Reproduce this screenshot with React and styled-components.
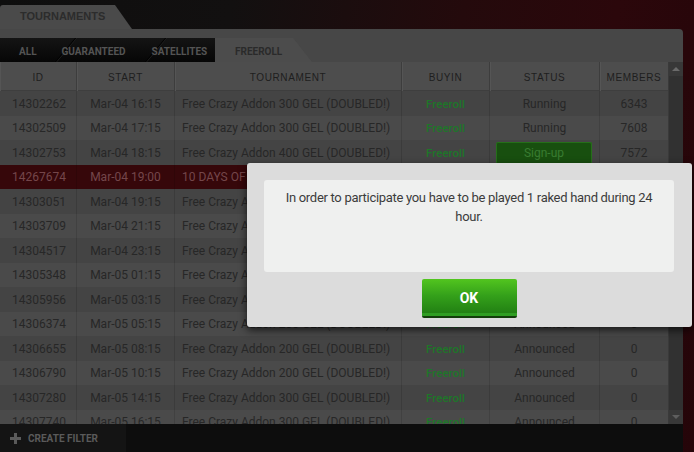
import React from 'react';
import styled, { createGlobalStyle } from 'styled-components';

const rows = [
    { id: '14302262', start: 'Mar-04 16:15', name: 'Free Crazy Addon 300 GEL (DOUBLED!)', status: 'Running', members: '6343' },
    { id: '14302509', start: 'Mar-04 17:15', name: 'Free Crazy Addon 300 GEL (DOUBLED!)', status: 'Running', members: '7608' },
    { id: '14302753', start: 'Mar-04 18:15', name: 'Free Crazy Addon 400 GEL (DOUBLED!)', status: 'Sign-up', members: '7572' },
    { id: '14267674', start: 'Mar-04 19:00', name: '10 DAYS OF FREEROLLS 1000 GEL', status: 'Running', members: '2114', active: true },
    { id: '14303051', start: 'Mar-04 19:15', name: 'Free Crazy Addon 300 GEL (DOUBLED!)', status: 'Registering', members: '312' },
    { id: '14303709', start: 'Mar-04 21:15', name: 'Free Crazy Addon 300 GEL (DOUBLED!)', status: 'Registering', members: '148' },
    { id: '14304517', start: 'Mar-04 23:15', name: 'Free Crazy Addon 300 GEL (DOUBLED!)', status: 'Registering', members: '56' },
    { id: '14305348', start: 'Mar-05 01:15', name: 'Free Crazy Addon 200 GEL (DOUBLED!)', status: 'Announced', members: '0' },
    { id: '14305956', start: 'Mar-05 03:15', name: 'Free Crazy Addon 200 GEL (DOUBLED!)', status: 'Announced', members: '0' },
    { id: '14306374', start: 'Mar-05 05:15', name: 'Free Crazy Addon 200 GEL (DOUBLED!)', status: 'Announced', members: '0' },
    { id: '14306655', start: 'Mar-05 08:15', name: 'Free Crazy Addon 200 GEL (DOUBLED!)', status: 'Announced', members: '0' },
    { id: '14306790', start: 'Mar-05 10:15', name: 'Free Crazy Addon 200 GEL (DOUBLED!)', status: 'Announced', members: '0' },
    { id: '14307280', start: 'Mar-05 14:15', name: 'Free Crazy Addon 300 GEL (DOUBLED!)', status: 'Announced', members: '0' },
    { id: '14307740', start: 'Mar-05 16:15', name: 'Free Crazy Addon 300 GEL (DOUBLED!)', status: 'Announced', members: '0' },
];

const columns = ['ID', 'START', 'TOURNAMENT', 'BUYIN', 'STATUS', 'MEMBERS'];
const tabs = ['ALL', 'GUARANTEED', 'SATELLITES'];

function App() {
    return (
        <>
            <GlobalStyle />
            <Page>
                <Window>
                    <TitleTab>TOURNAMENTS</TitleTab>
                    <Panel>
                        <TabBar>
                            <DarkTabs>
                                {tabs.map((t) => (
                                    <DarkTab key={t}>{t}</DarkTab>
                                ))}
                            </DarkTabs>
                            <ActiveTab>FREEROLL</ActiveTab>
                        </TabBar>
                        <TableArea>
                            <Table>
                                <HeaderRow>
                                    {columns.map((c) => (
                                        <HeaderCell key={c}>{c}</HeaderCell>
                                    ))}
                                </HeaderRow>
                                <Body>
                                    {rows.map((r, i) => (
                                        <Row key={r.id} $odd={i % 2 === 1} $active={r.active}>
                                            <Cell $align="left">{r.id}</Cell>
                                            <Cell>{r.start}</Cell>
                                            <Cell $align="left" $pad="7px">{r.name}</Cell>
                                            <Cell><BuyIn>Freeroll</BuyIn></Cell>
                                            <Cell>
                                                {r.status === 'Sign-up' ? <SignUp>Sign-up</SignUp> : r.status}
                                            </Cell>
                                            <Cell>{r.members}</Cell>
                                        </Row>
                                    ))}
                                </Body>
                            </Table>
                            <ScrollTrack>
                                <ScrollButton>
                                    <Arrow />
                                </ScrollButton>
                                <ScrollButton>
                                    <Arrow $down />
                                </ScrollButton>
                            </ScrollTrack>
                        </TableArea>
                        <BottomBar>
                            <FilterButton>
                                <svg width="11" height="11" viewBox="0 0 11 11">
                                    <rect x="4" y="0" width="3" height="11" fill="#5a5a5a" />
                                    <rect x="0" y="4" width="11" height="3" fill="#5a5a5a" />
                                </svg>
                                CREATE FILTER
                            </FilterButton>
                        </BottomBar>
                    </Panel>
                </Window>

                <Modal>
                    <MessageBox>
                        In order to participate you have to be played 1 raked hand during 24 hour.
                    </MessageBox>
                    <OkButton>OK</OkButton>
                </Modal>
            </Page>
        </>
    );
}

const GlobalStyle = createGlobalStyle`
    html, body {
        margin: 0;
        padding: 0;
        width: 694px;
        height: 452px;
        overflow: hidden;
    }
    body {
        font-family: 'Roboto', 'Liberation Sans', sans-serif;
    }
`;

const Page = styled.div`
    position: relative;
    width: 694px;
    height: 452px;
    overflow: hidden;
    background: linear-gradient(100deg, #0e0e0e 0%, #121010 30%, #240a0c 60%, #2b070b 80%, #250509 100%);
`;

const Window = styled.div`
    display: flex;
    flex-direction: column;
    width: 683px;
    height: 452px;
    padding-top: 5px;
    box-sizing: border-box;
`;

const TitleTab = styled.div`
    width: 132px;
    height: 24px;
    background: #4a4a4a;
    border-top-left-radius: 3px;
    clip-path: polygon(0 0, 115px 0, 100% 100%, 0 100%);
    font-family: 'Liberation Sans', sans-serif;
    font-size: 11px;
    font-weight: bold;
    color: #2c2c2c;
    padding-left: 20px;
    box-sizing: border-box;
    line-height: 23px;
`;

const Panel = styled.div`
    flex: 1;
    display: flex;
    flex-direction: column;
    background: #474747;
    border-top-right-radius: 4px;
    padding-top: 9px;
    min-height: 0;
`;

const TabBar = styled.div`
    display: flex;
    height: 24px;
`;

const DarkTabs = styled.div`
    display: flex;
    background: linear-gradient(#141414, #060606);
    width: 215px;
`;

const DarkTab = styled.div`
    position: relative;
    font-family: 'Roboto', sans-serif;
    font-size: 10px;
    font-weight: bold;
    color: #545454;
    line-height: 24px;
    padding-top: 2px;
    box-sizing: border-box;
    &:first-child {
        padding-left: 19px;
        padding-right: 25px;
    }
    &:nth-child(2) {
        padding-left: 0;
        padding-right: 26px;
    }
    &:nth-child(3) {
        padding-left: 0;
        padding-right: 7px;
    }
    &:not(:last-child)::after {
        content: '';
        position: absolute;
        right: 6px;
        top: 0;
        bottom: 0;
        width: 1px;
        background: #000;
        box-shadow: 1px 0 0 #222;
        transform: skewX(-40deg);
        transform-origin: 0 100%;
    }
`;

const ActiveTab = styled.div`
    width: 97px;
    background: #4c4c4c;
    clip-path: polygon(0 0, 78px 0, 100% 100%, 0 100%);
    font-family: 'Roboto', sans-serif;
    font-size: 10px;
    font-weight: bold;
    color: #2a2a2a;
    line-height: 24px;
    padding: 2px 0 0 20px;
    box-sizing: border-box;
`;

const TableArea = styled.div`
    flex: 1;
    display: flex;
    min-height: 0;
`;

const Table = styled.div`
    flex: 1;
    display: flex;
    flex-direction: column;
    min-width: 0;
`;

const grid = `
    display: grid;
    grid-template-columns: 77px 98px 227px 88px 110px 1fr;
`;

const HeaderRow = styled.div`
    ${grid};
    height: 29px;
    background: #4d4d4d;
    border-bottom: 1px solid #3e3e3e;
    box-sizing: border-box;
`;

const HeaderCell = styled.div`
    font-family: 'Liberation Sans', sans-serif;
    font-size: 10px;
    letter-spacing: 0.6px;
    color: #1e1e1e;
    text-align: center;
    line-height: 28px;
    padding-top: 2px;
    border-right: 1px solid #3d3d3d;
    box-shadow: inset 1px 0 0 #555;
    &:last-child {
        border-right: none;
    }
`;

const Body = styled.div`
    flex: 1;
    overflow: hidden;
`;

const Row = styled.div`
    ${grid};
    height: 24.5px;
    background: ${(p) => (p.$active ? '#36070a' : p.$odd ? '#4a4a4a' : '#444444')};
    color: ${(p) => (p.$active ? '#74464a' : '#272727')};
`;

const Cell = styled.div`
    font-family: 'Roboto', sans-serif;
    font-size: 12px;
    line-height: 23px;
    padding-top: 1.5px;
    white-space: nowrap;
    overflow: hidden;
    text-align: ${(p) => (p.$align === 'left' ? 'left' : 'center')};
    padding-left: ${(p) => (p.$align === 'left' ? p.$pad || '12px' : '0')};
    border-right: 1px solid rgba(0, 0, 0, 0.12);
    &:last-child {
        border-right: none;
    }
`;

const BuyIn = styled.span`
    font-size: 11.5px;
    font-weight: 500;
    color: #1e7629;
`;

const SignUp = styled.div`
    margin: 0 7px 0 6px;
    height: 22px;
    line-height: 20px;
    background: #184f0f;
    border: 1px solid #256f19;
    border-bottom: none;
    border-radius: 2px;
    color: #387c31;
    font-size: 12px;
    box-sizing: border-box;
`;

const ScrollTrack = styled.div`
    width: 15px;
    display: flex;
    flex-direction: column;
    justify-content: space-between;
    background: #313131;
    border-left: 1px solid #3a3a3a;
    box-sizing: border-box;
`;

const ScrollButton = styled.div`
    height: 14px;
    background: #383838;
    display: flex;
    align-items: center;
    justify-content: center;
`;

const Arrow = styled.div`
    width: 0;
    height: 0;
    border-left: 4px solid transparent;
    border-right: 4px solid transparent;
    ${(p) => (p.$down ? 'border-top: 4px solid #5e5e5e;' : 'border-bottom: 4px solid #6a6a6a;')}
`;

const BottomBar = styled.div`
    height: 28px;
    background: #0d0d0d;
    display: flex;
`;

const FilterButton = styled.div`
    width: 126px;
    background: #141414;
    display: flex;
    align-items: center;
    gap: 7px;
    padding-left: 10px;
    box-sizing: border-box;
    font-family: 'Roboto', sans-serif;
    font-size: 10px;
    font-weight: bold;
    color: #5a5a5a;
`;

const Modal = styled.div`
    position: absolute;
    left: 247px;
    top: 163px;
    width: 445px;
    height: 164px;
    box-sizing: border-box;
    background: #dcdcdc;
    border-radius: 3px;
    box-shadow: 0 3px 8px rgba(0, 0, 0, 0.7);
    padding: 17px 18px 0 17px;
    display: flex;
    flex-direction: column;
    align-items: center;
`;

const MessageBox = styled.div`
    align-self: stretch;
    height: 92px;
    background: #eff0ef;
    border-radius: 3px;
    padding: 8px 18px 0;
    box-sizing: border-box;
    text-align: center;
    font-family: 'Roboto', sans-serif;
    font-size: 13px;
    letter-spacing: -0.3px;
    line-height: 19px;
    color: #3c3c3c;
`;

const OkButton = styled.div`
    margin-top: 7px;
    width: 95px;
    height: 39px;
    box-sizing: border-box;
    border-radius: 2px;
    background: linear-gradient(#52c51f, #34a01a 45%, #1f7b12);
    border-bottom: 2px solid #133e0b;
    box-shadow: inset 0 -3px 0 #2f9e22;
    display: flex;
    align-items: center;
    justify-content: center;
    font-family: 'Roboto', sans-serif;
    font-size: 14px;
    font-weight: bold;
    color: #fff;
`;

export default App;
